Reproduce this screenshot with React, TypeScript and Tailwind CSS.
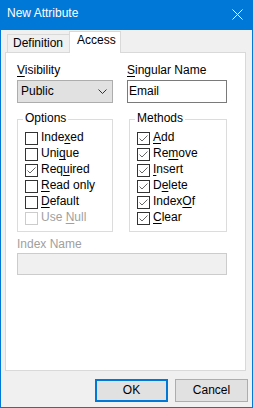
import React from 'react';

const font = { fontFamily: '"Liberation Sans", Arial, sans-serif' };

const Check = ({ checked, disabled }: { checked?: boolean; disabled?: boolean }) => (
  <span
    className={`mt-px flex h-[13px] w-[13px] shrink-0 items-center justify-center border bg-white ${
      disabled ? 'border-[#cccccc]' : 'border-[#333333]'
    }`}
  >
    {checked && (
      <svg width="11" height="11" viewBox="0 0 11 11">
        <polyline points="1.5,5.5 4,8 9.5,2.5" fill="none" stroke="#666666" strokeWidth="1" />
      </svg>
    )}
  </span>
);

// label with one underlined mnemonic letter
const Label = ({ text, u, disabled }: { text: string; u: number; disabled?: boolean }) => (
  <span className={`leading-[13px] ${disabled ? 'text-[#a0a0a0]' : 'text-black'}`}>
    {text.slice(0, u)}
    <span className="underline underline-offset-[2px]">{text[u]}</span>
    {text.slice(u + 1)}
  </span>
);

type Item = { text: string; u: number; checked?: boolean; disabled?: boolean };

const GroupBox = ({ title, items, width }: { title: string; items: Item[]; width: string }) => (
  <div className={`relative h-[113px] ${width} border border-[#dcdcdc] pl-[7px] pt-[11px]`}>
    <span className="absolute -top-[9px] left-[5px] bg-white px-[2px] leading-[15px]">{title}</span>
    <div className="flex flex-col">
      {items.map((it) => (
        <div key={it.text} className="flex h-[16px] items-start gap-[3px]">
          <Check checked={it.checked} disabled={it.disabled} />
          <Label text={it.text} u={it.u} disabled={it.disabled} />
        </div>
      ))}
    </div>
  </div>
);

const options: Item[] = [
  { text: 'Indexed', u: 4 },
  { text: 'Unique', u: 3 },
  { text: 'Required', u: 3, checked: true },
  { text: 'Read only', u: 0 },
  { text: 'Default', u: 0 },
  { text: 'Use Null', u: 4, disabled: true },
];

const methods: Item[] = [
  { text: 'Add', u: 0, checked: true },
  { text: 'Remove', u: 2, checked: true },
  { text: 'Insert', u: 0, checked: true },
  { text: 'Delete', u: 1, checked: true },
  { text: 'IndexOf', u: 5, checked: true },
  { text: 'Clear', u: 0, checked: true },
];

export default function App() {
  return (
    <div
      className="flex h-[408px] w-[253px] flex-col border border-[#0078d7] bg-[#f0f0f0] text-[12px] leading-[15px] text-black"
      style={font}
    >
      {/* Title bar */}
      <div className="flex h-[29px] shrink-0 items-start bg-[#0078d7] pl-[6px] pt-[5px] text-white">
        <span>New Attribute</span>
        <svg className="ml-auto mr-[9px] mt-[3px]" width="11" height="11" viewBox="0 0 11 11">
          <path d="M0.5 0.5 L10.5 10.5 M10.5 0.5 L0.5 10.5" stroke="#ffffff" strokeWidth="1" />
        </svg>
      </div>

      {/* Tabs */}
      <div className="flex h-[22px] shrink-0 items-end pl-[6px]">
        <div className="h-[18px] w-[62px] border border-b-0 border-r-0 border-[#d9d9d9] bg-[#f0f0f0] pl-[5px] pt-px">
          Definition
        </div>
        <div className="relative z-10 -mb-px h-[22px] w-[52px] border border-b-0 border-[#d9d9d9] bg-white pl-[7px] pt-px">
          Access
        </div>
      </div>

      {/* Panel */}
      <div className="ml-[4px] h-[319px] w-[241px] shrink-0 border border-[#d9d9d9] bg-white pl-[11px] pt-[10px]">
        <div className="flex">
          <div className="flex w-[96px] flex-col">
            <span>
              <span className="underline underline-offset-[2px]">V</span>isibility
            </span>
            <div className="mt-[2px] flex h-[23px] items-center border border-[#adadad] bg-[#e1e1e1] pl-[3px] pr-[5px]">
              <span>Public</span>
              <svg className="ml-auto" width="9" height="5" viewBox="0 0 9 5">
                <polyline points="0.5,0.5 4.5,4.5 8.5,0.5" fill="none" stroke="#333333" strokeWidth="1" />
              </svg>
            </div>
          </div>
          <div className="ml-[14px] flex w-[100px] flex-col">
            <span>
              <span className="underline underline-offset-[2px]">S</span>ingular Name
            </span>
            <div className="mt-[2px] flex h-[23px] items-center border border-[#7a7a7a] bg-white pl-[1px]">
              Email
            </div>
          </div>
        </div>

        <div className="mt-[16px] flex gap-[16px]">
          <GroupBox title="Options" items={options} width="w-[96px]" />
          <GroupBox title="Methods" items={methods} width="w-[98px]" />
        </div>

        <div className="mt-[5px] text-[#a0a0a0]">Index Name</div>
        <div className="mt-px h-[22px] w-[210px] border border-[#cccccc] bg-[#f0f0f0]" />
      </div>

      {/* Buttons */}
      <div className="mt-[8px] flex justify-end gap-[7px] pr-[4px]">
        <button className="flex h-[23px] w-[73px] items-center justify-center border-2 border-[#0078d7] bg-[#e1e1e1]">
          OK
        </button>
        <button className="flex h-[23px] w-[73px] items-center justify-center border border-[#adadad] bg-[#e1e1e1]">
          Cancel
        </button>
      </div>
    </div>
  );
}
